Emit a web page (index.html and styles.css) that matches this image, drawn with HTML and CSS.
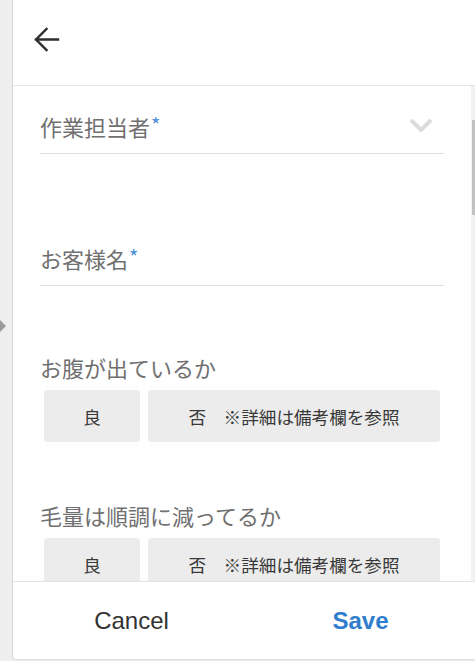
FILE: index.html
```html
<!DOCTYPE html>
<html lang="ja">
<head>
<meta charset="utf-8">
<link rel="stylesheet" href="styles.css">
</head>
<body>
<div class="page">
  <div class="strip"><span class="handle"></span></div>
  <div class="panel">
    <header class="header">
      <svg class="back" width="26" height="26" viewBox="0 0 26 26" aria-label="back">
        <path d="M2 12.5H24 M12.5 2L2 12.5L12.5 23" fill="none" stroke="#2e2e2e" stroke-width="2.4" stroke-linecap="square"/>
      </svg>
    </header>
    <main class="scroll">
      <div class="field field-first">
        <span class="label">作業担当者<span class="req">*</span></span>
        <svg class="chev" width="24" height="14" viewBox="0 0 24 14"><path d="M2 2L12 12L22 2" fill="none" stroke="#dcdcdc" stroke-width="4"/></svg>
      </div>
      <div class="field field-second">
        <span class="label">お客様名<span class="req">*</span></span>
      </div>
      <div class="question q-first">
        <div class="label">お腹が出ているか</div>
        <div class="choices">
          <div class="choice c-good">良</div>
          <div class="choice c-bad">否　※詳細は備考欄を参照</div>
        </div>
      </div>
      <div class="question q-second">
        <div class="label">毛量は順調に減ってるか</div>
        <div class="choices">
          <div class="choice c-good">良</div>
          <div class="choice c-bad">否　※詳細は備考欄を参照</div>
        </div>
      </div>
      <div class="scrollbar"><div class="thumb"></div></div>
    </main>
    <footer class="footer">
      <div class="action cancel">Cancel</div>
      <div class="action save">Save</div>
    </footer>
  </div>
</div>
</body>
</html>
```
FILE: styles.css
```css
* { box-sizing: border-box; }
html, body { margin: 0; padding: 0; }
body {
  background: #eeeeee;
  font-family: "Noto Sans CJK JP", "Noto Sans", sans-serif;
  width: 475px;
  height: 661px;
  overflow: hidden;
}
.page {
  display: flex;
  height: 660px;
}
.strip {
  width: 12px;
  flex: none;
  padding-top: 320px;
}
.handle {
  display: block;
  width: 0;
  height: 0;
  border-left: 6px solid #9a9a9a;
  border-top: 6.5px solid transparent;
  border-bottom: 6.5px solid transparent;
}
.panel {
  flex: 1;
  background: #fff;
  border-left: 1px solid #d6d6d6;
  border-bottom: 1px solid #dedede;
  border-bottom-left-radius: 4px;
  display: flex;
  flex-direction: column;
  min-width: 0;
}
.header {
  height: 86px;
  flex: none;
  border-bottom: 1px solid #e6e6e6;
  display: flex;
  align-items: center;
  padding-left: 21px;
  padding-bottom: 6px;
}
.back { display: block; }
.scroll {
  height: 495px;
  flex: none;
  position: relative;
  overflow: hidden;
  padding: 0 31px 0 27px;
}
.field {
  display: flex;
  align-items: center;
  justify-content: space-between;
  border-bottom: 1px solid #dddddd;
  padding-bottom: 12px;
}
.field-first { margin-top: 25px; }
.field-second { margin-top: 89px; }
.label {
  display: block;
  height: 30px;
  font-size: 22px;
  line-height: 30px;
  color: #707070;
  white-space: nowrap;
}
.req {
  color: #4a8fd6;
  margin-left: 1px;
  font-size: 20px;
  line-height: 0;
  vertical-align: 3px;
}
.chev {
  display: block;
  margin-right: 11px;
  margin-top: -2px;
}
.q-first { margin-top: 66px; }
.q-second { margin-top: 58px; }
.choices {
  display: flex;
  gap: 8px;
  padding: 0 4px;
  margin-top: 8px;
}
.choice {
  height: 52px;
  background: #ececec;
  border-radius: 3px;
  display: flex;
  align-items: center;
  justify-content: center;
  font-size: 17.6px;
  color: #383838;
  white-space: nowrap;
}
.c-good { width: 96px; flex: none; }
.c-bad { flex: 1; }
.scrollbar {
  position: absolute;
  right: 0;
  top: 0;
  bottom: 0;
  width: 4px;
  background: #f1f1f1;
}
.thumb {
  position: absolute;
  right: 0;
  top: 34px;
  width: 3px;
  height: 95px;
  background: #c2c2c2;
}
.footer {
  flex: 1;
  border-top: 1px solid #e3e3e3;
  display: flex;
  align-items: center;
  padding-left: 4px;
}
.action {
  flex: 1;
  text-align: center;
  font-family: "Liberation Sans", Arial, sans-serif;
  font-size: 24px;
  line-height: 30px;
}
.cancel { color: #333; }
.save { color: #2f7dcc; font-weight: bold; }
```
